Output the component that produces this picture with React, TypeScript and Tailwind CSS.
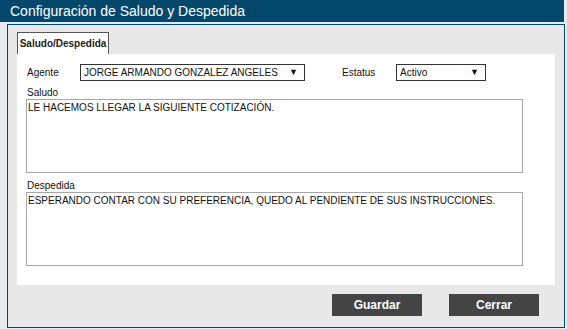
import React from 'react';

const font = { fontFamily: '"Liberation Sans", Arial, sans-serif' };

const FakeSelect: React.FC<{ value: string; width: string }> = ({ value, width }) => (
  <div className={`${width} h-[17px] border border-[#333] bg-white flex items-center justify-between pl-[3px] pr-[6px]`}>
    <span className="text-[10px] leading-none whitespace-nowrap text-[#111]">{value}</span>
    <span className="text-[9px] leading-none text-[#111]">▼</span>
  </div>
);

const Field: React.FC<{ label: string; text: string; labelH: string }> = ({ label, text, labelH }) => (
  <>
    <div className={`${labelH} flex items-end pl-[1px] text-[10px] leading-[13px] text-[#111]`}>{label}</div>
    <div className="w-[497px] h-[74px] border border-[#a6a6a6] bg-white px-[1px] pt-[1px] text-[10px] leading-[13px] text-[#111]">
      {text}
    </div>
  </>
);

export default function App() {
  return (
    <div className="w-[567px] h-[329px] bg-[#e9ebee] overflow-hidden" style={font}>
      <div className="w-[564px] h-[22px] bg-[#03476b] text-white text-[14px] leading-[22px] pl-[10px]">
        Configuración de Saludo y Despedida
      </div>

      <div className="mt-[2px] ml-[7px] w-[558px] h-[304px] border border-[#03476b] bg-[#e8e8e8] pt-[7px] px-[9px]">
        {/* Tab */}
        <div className="w-[92px] h-[22px] border border-b-0 border-[#555] bg-white flex items-center justify-center text-[10px] font-bold text-[#222]">
          Saludo/Despedida
        </div>

        {/* Tab Content */}
        <div className="h-[231px] bg-white pt-[10px] pl-[9px]">
          <div className="flex items-center h-[17px] text-[10px] text-[#111]">
            <div className="w-[54px] pl-[1px]">Agente</div>
            <FakeSelect value="JORGE ARMANDO GONZALEZ ANGELES" width="w-[225px]" />
            <div className="w-[54px] ml-[37px]">Estatus</div>
            <FakeSelect value="Activo" width="w-[90px]" />
          </div>
          <Field label="Saludo" labelH="h-[18px]" text="LE HACEMOS LLEGAR LA SIGUIENTE COTIZACIÓN." />
          <Field
            label="Despedida"
            labelH="h-[19px]"
            text="ESPERANDO CONTAR CON SU PREFERENCIA, QUEDO AL PENDIENTE DE SUS INSTRUCCIONES."
          />
        </div>

        {/* Buttons */}
        <div className="mt-[9px] flex justify-end gap-[27px] pr-[16px]">
          <button className="w-[90px] h-[22px] bg-[#444] text-white text-[12px] font-bold">Guardar</button>
          <button className="w-[90px] h-[22px] bg-[#444] text-white text-[12px] font-bold">Cerrar</button>
        </div>
      </div>
    </div>
  );
}
